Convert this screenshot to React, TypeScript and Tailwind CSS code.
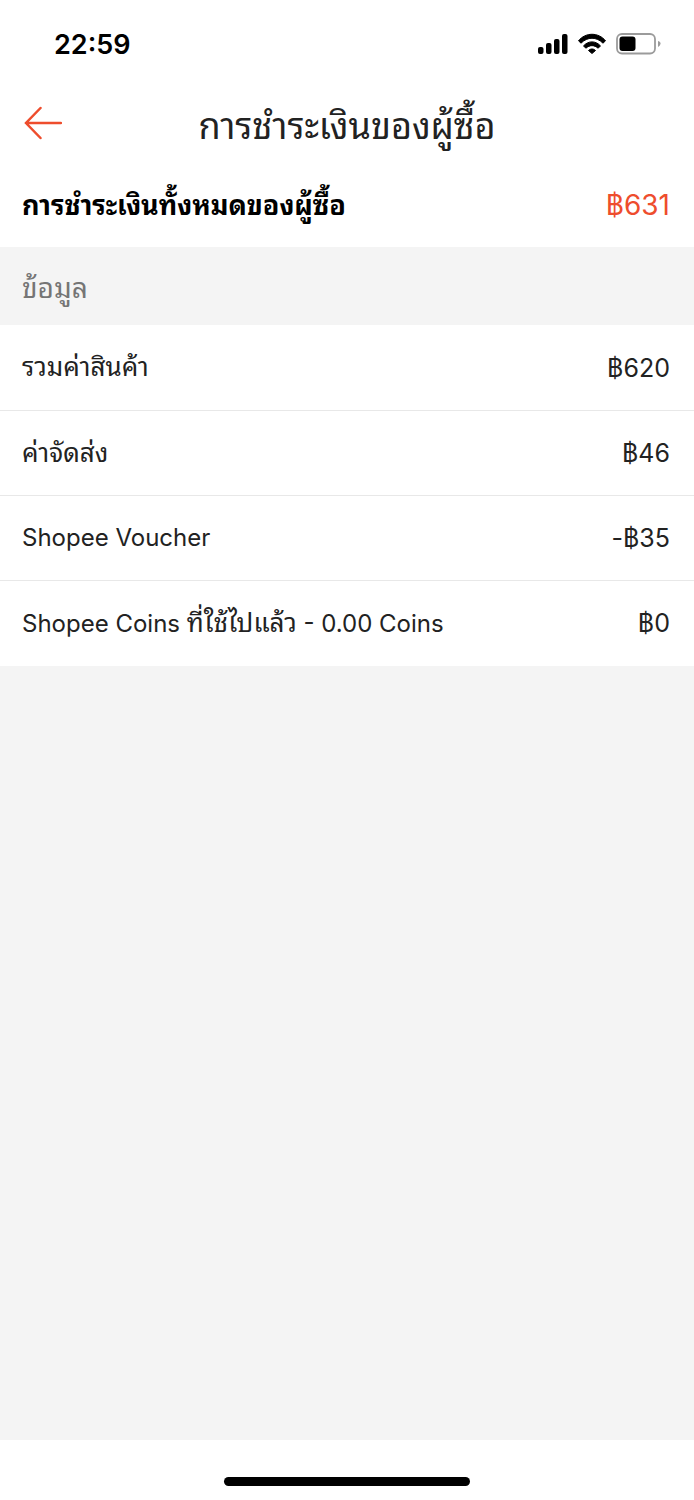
const items = [
  { label: [{ text: 'รวมค่าสินค้า', thai: true }], amount: '฿620' },
  { label: [{ text: 'ค่าจัดส่ง', thai: true }], amount: '฿46' },
  { label: [{ text: 'Shopee Voucher', thai: false }], amount: '-฿35' },
  {
    label: [
      { text: 'Shopee Coins ', thai: false },
      { text: 'ที่ใช้ไปแล้ว', thai: true },
      { text: ' - 0.00 Coins', thai: false },
    ],
    amount: '฿0',
  },
];

const StatusBar = () => (
  <div className="flex h-[88px] items-center justify-between pl-[54px] pr-8">
    <span className="pt-0.5 text-[27px] font-semibold leading-8 text-black">22:59</span>
    <div className="flex items-center gap-2">
      <svg width="32" height="22" viewBox="0 0 32 22" fill="#000" aria-hidden="true">
        <rect x="0" y="14" width="5.500" height="7" rx="2" />
        <rect x="8" y="10" width="5.500" height="11" rx="2" />
        <rect x="16" y="6" width="5.500" height="15" rx="2" />
        <rect x="24" y="1" width="5.500" height="20" rx="2" />
      </svg>
      <svg width="30" height="22" viewBox="0 0 30 22" aria-hidden="true">
        <path d="M.5 7.800 C7.500 -0.900 20.500 -0.900 27.500 7.800 L25 10.200 C18.500 3.600 9.500 3.600 3 10.200 Z" fill="#000" stroke="#000" strokeLinejoin="round" />
        <path d="M5.500 13 C10 7.500 18 7.500 22.500 13 L20 15.200 C16.500 11.800 11.500 11.800 8 15.200 Z" fill="#000" stroke="#000" strokeLinejoin="round" />
        <path d="M10.500 17.500 C12.300 15.500 15.700 15.500 17.500 17.500 L14 20.500 Z" fill="#000" stroke="#000" strokeLinejoin="round" />
      </svg>
      <svg width="46" height="22" viewBox="0 0 46 22" aria-hidden="true">
        <rect x="1" y="1" width="38" height="19.500" rx="5" fill="none" stroke="#9b9b9b" strokeWidth="1.800" />
        <rect x="3.500" y="3.500" width="16" height="14.500" rx="3" fill="#000" />
        <path d="M42 8 Q45 9 44.500 11 Q44 13 42 14 Z" fill="#9b9b9b" />
      </svg>
    </div>
  </div>
);

export default function App() {
  return (
    <div className="flex min-h-screen flex-col bg-white font-['Inter','Noto_Sans_Thai_Looped','Loma','Garuda','Noto_Sans_Thai',sans-serif] text-[#222]">
      <StatusBar />
      <header className="grid h-[75px] grid-cols-[64px_1fr_64px] items-start">
        <button type="button" aria-label="ย้อนกลับ" className="pl-6 pt-[18px]">
          <svg width="38" height="34" viewBox="0 0 38 34" fill="none" stroke="#ee4d2d" strokeWidth="2.500" strokeLinecap="round">
            <path d="M37 17H2M16.500 2L2 17L16.500 32" />
          </svg>
        </button>
        <h1 className="pt-[14px] text-center text-[36px] leading-[48px]">การชำระเงินของผู้ซื้อ</h1>
      </header>
      <div className="flex h-[84px] items-center justify-between pl-[22px] pr-6">
        <h2 className="pt-0.5 text-[27px] font-bold leading-9 text-black">การชำระเงินทั้งหมดของผู้ซื้อ</h2>
        <span className="text-[28px] leading-9 text-[#ee4d2d]">฿631</span>
      </div>
      <main className="flex-1 bg-[#f4f4f4]">
        <h2 className="flex h-[78px] items-center px-[22px] pt-1 text-[28px] leading-9 text-[#757575]">ข้อมูล</h2>
        <dl className="bg-white pb-px">
          {items.map((item) => (
            <div
              key={item.amount}
              className="flex h-[85px] items-center justify-between border-t border-[#e8e8e8] pl-[22px] pr-6 leading-9 first:border-t-0"
            >
              <dt className="pt-0.5">
                {item.label.map((part) => (
                  <span key={part.text} className={part.thai ? 'text-[26px]' : 'text-[24px]'}>
                    {part.text}
                  </span>
                ))}
              </dt>
              <dd className="text-[25px]">{item.amount}</dd>
            </div>
          ))}
        </dl>
      </main>
      <footer className="flex h-[60px] justify-center pt-[37px]">
        <div className="h-[9px] w-[246px] rounded-full bg-black" />
      </footer>
    </div>
  );
}
